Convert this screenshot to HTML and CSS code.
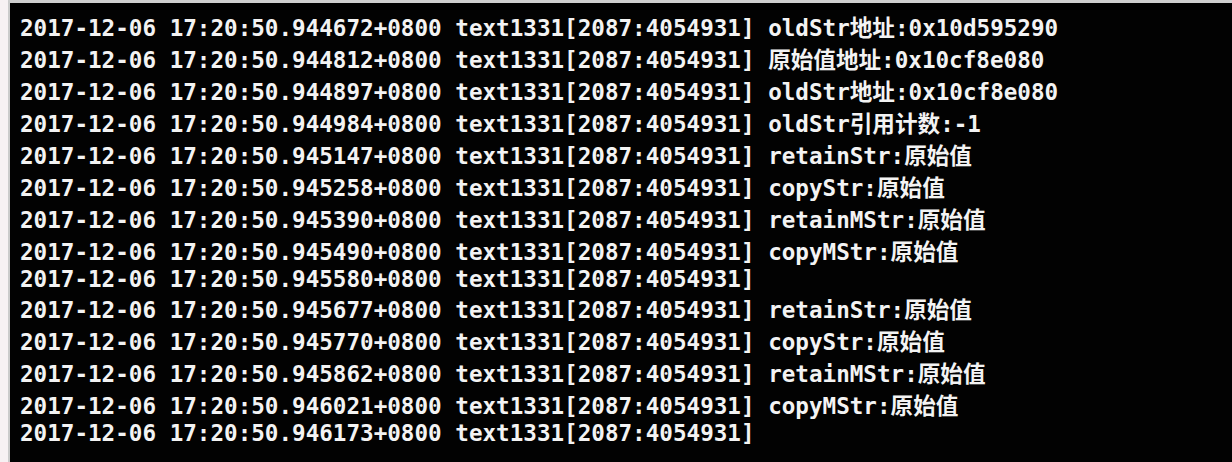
FILE: index.html
```html
<!DOCTYPE html>
<html>
<head>
    <meta charset="UTF-8">
    <title>Console Output</title>
    <link rel="stylesheet" href="styles.css">
</head>
<body>
    <div class="console">
        <div class="log">
            <div class="line wide">2017-12-06 17:20:50.944672+0800 text1331[2087:4054931] oldStr地址:0x10d595290</div>
            <div class="line wide">2017-12-06 17:20:50.944812+0800 text1331[2087:4054931] 原始值地址:0x10cf8e080</div>
            <div class="line wide">2017-12-06 17:20:50.944897+0800 text1331[2087:4054931] oldStr地址:0x10cf8e080</div>
            <div class="line wide">2017-12-06 17:20:50.944984+0800 text1331[2087:4054931] oldStr引用计数:-1</div>
            <div class="line wide">2017-12-06 17:20:50.945147+0800 text1331[2087:4054931] retainStr:原始值</div>
            <div class="line wide">2017-12-06 17:20:50.945258+0800 text1331[2087:4054931] copyStr:原始值</div>
            <div class="line wide">2017-12-06 17:20:50.945390+0800 text1331[2087:4054931] retainMStr:原始值</div>
            <div class="line wide">2017-12-06 17:20:50.945490+0800 text1331[2087:4054931] copyMStr:原始值</div>
            <div class="line">2017-12-06 17:20:50.945580+0800 text1331[2087:4054931]</div>
            <div class="line wide">2017-12-06 17:20:50.945677+0800 text1331[2087:4054931] retainStr:原始值</div>
            <div class="line wide">2017-12-06 17:20:50.945770+0800 text1331[2087:4054931] copyStr:原始值</div>
            <div class="line wide">2017-12-06 17:20:50.945862+0800 text1331[2087:4054931] retainMStr:原始值</div>
            <div class="line wide">2017-12-06 17:20:50.946021+0800 text1331[2087:4054931] copyMStr:原始值</div>
            <div class="line">2017-12-06 17:20:50.946173+0800 text1331[2087:4054931]</div>
        </div>
    </div>
</body>
</html>
```

FILE: styles.css
```css
html, body {
    margin: 0;
    height: 100%;
}

body {
    background: #f7f1f3;
    padding-left: 8px;
    box-sizing: border-box;
}

.console {
    height: 100%;
    box-sizing: border-box;
    background: #020202;
    border-left: 2px solid #cbcbcb;
    border-top: 3px solid #cfcfcf;
    padding: 7px 10px 0 10px;
    overflow: hidden;
}

.log {
    font-family: "DejaVu Sans Mono", "Noto Sans CJK SC", monospace;
    font-weight: bold;
    font-size: 22.6px;
    line-height: 26px;
    color: #f3f3f3;
}

.line {
    height: 26px;
    white-space: pre;
}

.line.wide {
    padding-top: 4.5px;
    padding-bottom: 1.5px;
}
```
